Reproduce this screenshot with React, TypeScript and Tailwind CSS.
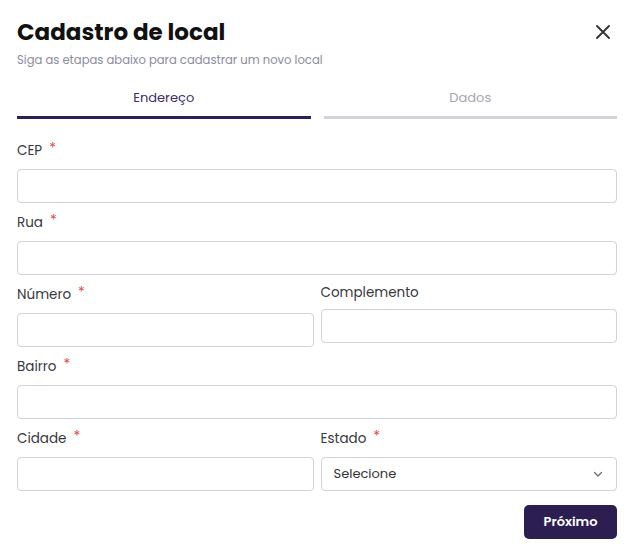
import React from "react";

const font = { fontFamily: "Poppins, Inter, 'Noto Sans', sans-serif" };

function Label({ text, required }: { text: string; required?: boolean }) {
  return (
    <div className={`flex items-center text-[13.5px] text-[#38383d] ${required ? "h-5" : "h-[16px]"}`}>
      <span>{text}</span>
      {required && <span className="ml-[7px] text-[14px] leading-none text-[#e5484d] relative -top-[3px]">*</span>}
    </div>
  );
}

function Field({ text, required }: { text: string; required?: boolean }) {
  return (
    <div className="flex flex-col gap-2">
      <Label text={text} required={required} />
      <input className="h-[34px] w-full rounded-[4px] border border-[#d2d2da] bg-white px-3 text-[13px] outline-none" />
    </div>
  );
}

export default function App() {
  return (
    <div className="w-[635px] h-[557px] bg-white pl-[17px] pr-[18px] pt-[18px]" style={font}>
      <div className="flex items-center justify-between h-7">
        <h1 className="text-[23px] leading-7 font-bold text-[#111]">Cadastro de local</h1>
        <svg width="14" height="14" viewBox="0 0 14 14" className="mr-[7px]">
          <path d="M1 1L13 13M13 1L1 13" stroke="#333" strokeWidth="1.9" strokeLinecap="round" />
        </svg>
      </div>
      <p className="mt-[6px] text-[11.6px] leading-4 text-[#8b8b9c]">Siga as etapas abaixo para cadastrar um novo local</p>

      <div className="mt-[20px] grid grid-cols-2 gap-x-[13px]">
        <div className="flex flex-col items-center">
          <span className="text-[13px] leading-5 text-[#3b2d69]">Endereço</span>
          <div className="mt-2 h-[3px] w-full bg-[#2e1f55]" />
        </div>
        <div className="flex flex-col items-center">
          <span className="text-[13px] leading-5 text-[#a3a3b3]">Dados</span>
          <div className="mt-2 h-[3px] w-full bg-[#d3d3dc]" />
        </div>
      </div>

      <div className="mt-[22px] flex flex-col gap-[10px]">
        <Field text="CEP" required />
        <Field text="Rua" required />
        <div className="grid grid-cols-2 gap-x-[7px] items-start">
          <Field text="Número" required />
          <Field text="Complemento" />
        </div>
        <Field text="Bairro" required />
        <div className="grid grid-cols-2 gap-x-[7px] items-start">
          <Field text="Cidade" required />
          <div className="flex flex-col gap-2">
            <Label text="Estado" required />
            <div className="h-[34px] w-full rounded-[4px] border border-[#d2d2da] bg-white pl-3 pr-3 flex items-center justify-between text-[13px] text-[#333338]">
              <span>Selecione</span>
              <svg width="12" height="12" viewBox="0 0 12 12">
                <path d="M2.5 4.5L6 8L9.5 4.5" stroke="#6b6b78" strokeWidth="1.3" fill="none" strokeLinecap="round" strokeLinejoin="round" />
              </svg>
            </div>
          </div>
        </div>
      </div>

      <div className="mt-[14px] flex justify-end">
        <button className="h-[34px] w-[93px] rounded-[5px] bg-[#2d1e52] text-[13px] font-semibold text-white">Próximo</button>
      </div>
    </div>
  );
}
